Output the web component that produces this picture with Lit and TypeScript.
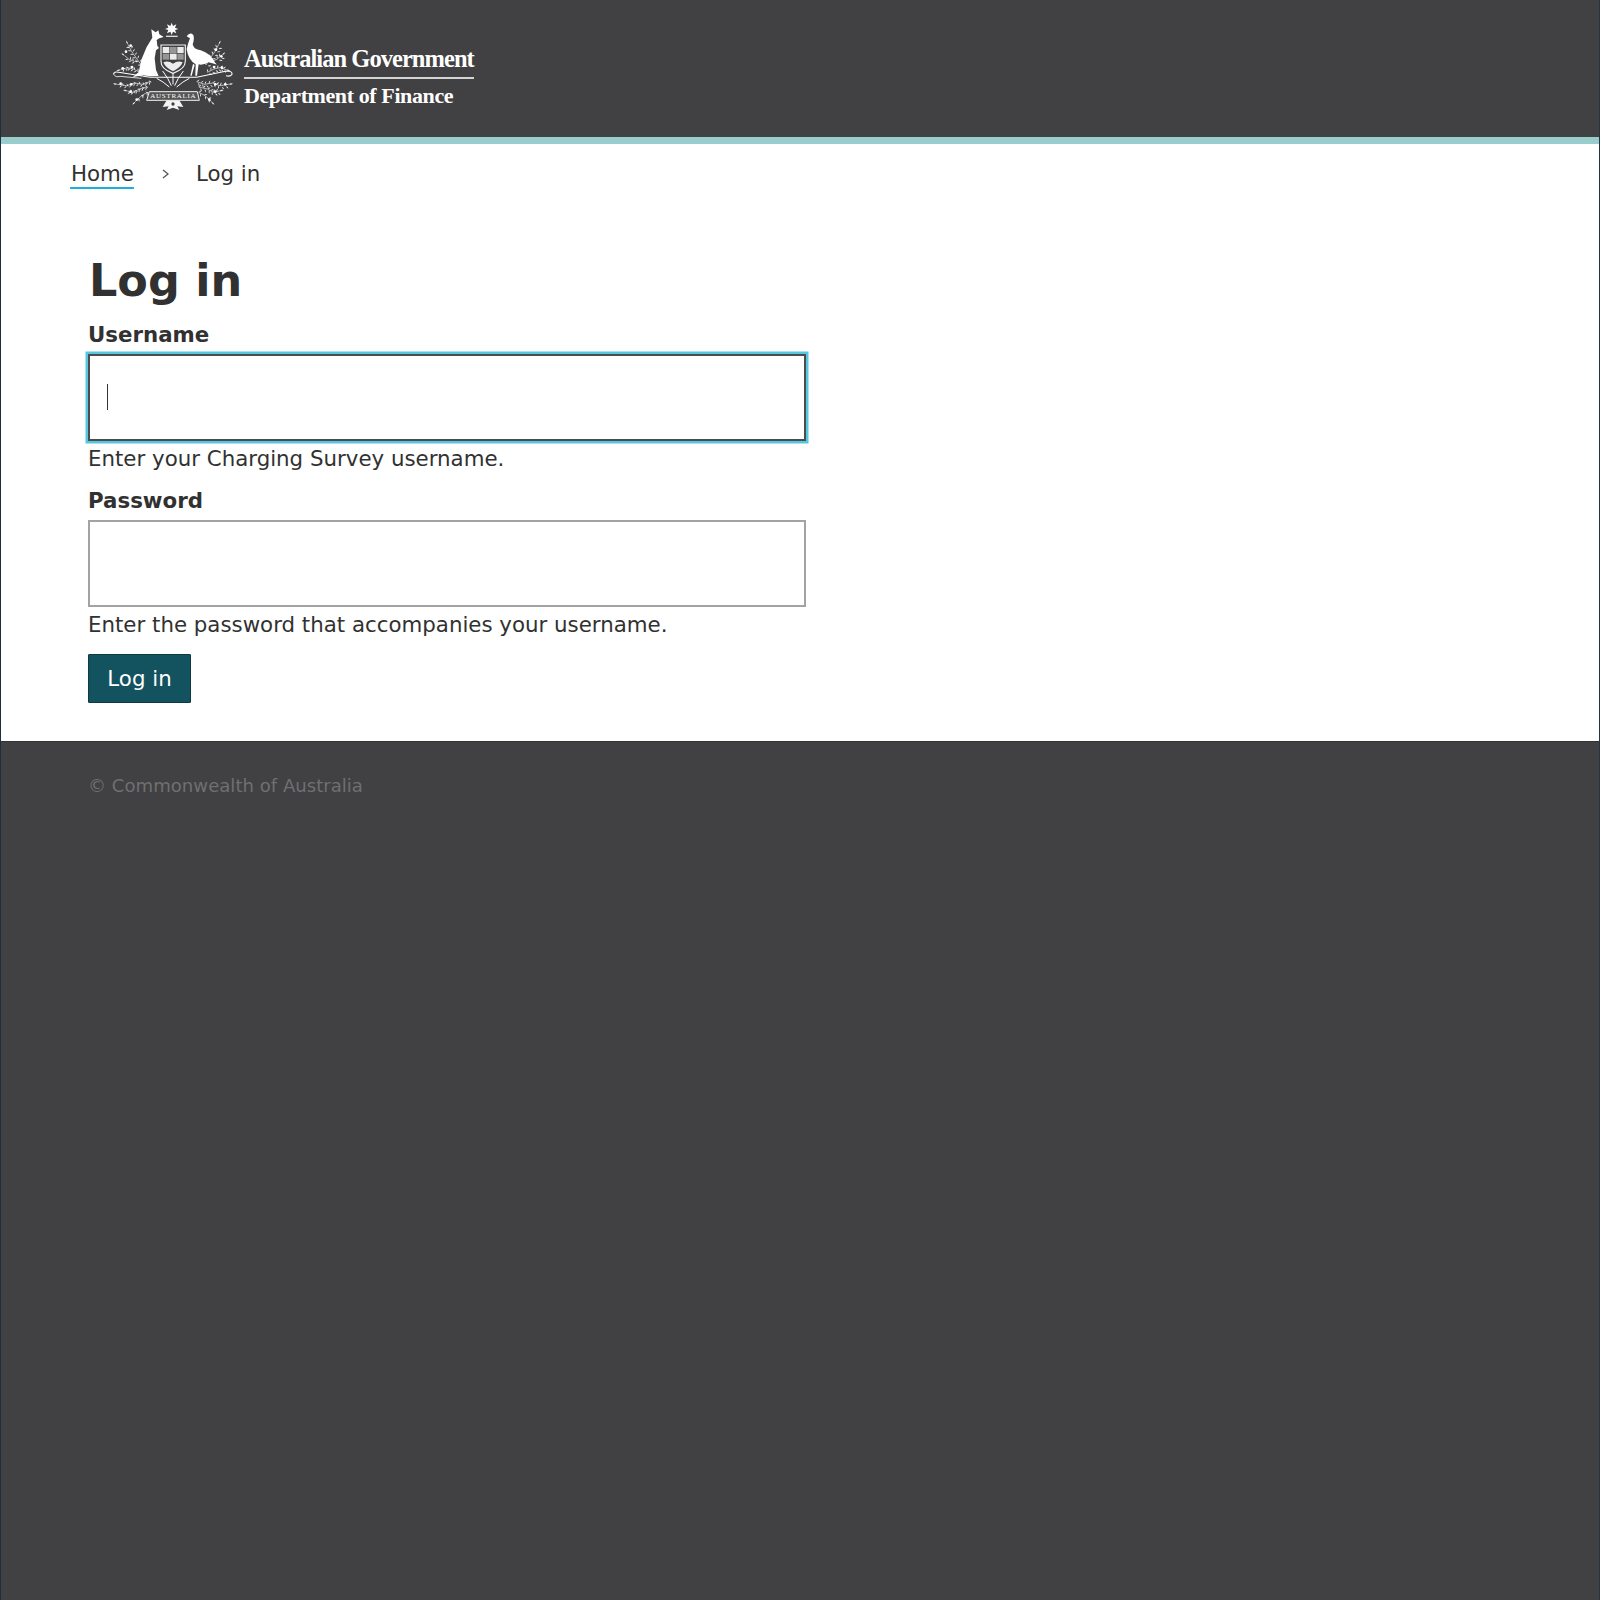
import { LitElement, html, css, svg } from "lit";
import { customElement } from "lit/decorators.js";

type P = [number, number];

const leaf = (x: number, y: number, a: number, l: number) =>
  svg`<path transform="translate(${x.toFixed(1)} ${y.toFixed(1)}) rotate(${a.toFixed(0)})" d="M0 0 Q${l / 2} ${-l / 3.4} ${l} 0 Q${l / 2} ${l / 3.4} 0 0Z"/>`;

const sprig = (pts: P[], size = 11) => {
  const out: unknown[] = [];
  for (let i = 0; i < pts.length - 1; i++) {
    const [x0, y0] = pts[i];
    const [x1, y1] = pts[i + 1];
    const len = Math.hypot(x1 - x0, y1 - y0);
    const base = (Math.atan2(y1 - y0, x1 - x0) * 180) / Math.PI;
    const steps = Math.max(1, Math.round(len / 12));
    for (let s = 0; s < steps; s++) {
      const t = s / steps;
      const x = x0 + (x1 - x0) * t;
      const y = y0 + (y1 - y0) * t;
      out.push(leaf(x, y, base - 55, size), leaf(x + 5, y + 3, base + 55, size));
    }
  }
  const [ex, ey] = pts[pts.length - 1];
  const [px, py] = pts[pts.length - 2];
  out.push(leaf(ex, ey, (Math.atan2(ey - py, ex - px) * 180) / Math.PI, size + 2));
  return out;
};

const path = (pts: P[]) => "M" + pts.map((p) => p.join(" ")).join("L");

const branches: P[][] = [
  [[124, 150], [108, 128], [94, 108], [84, 88]],
  [[104, 140], [86, 132], [74, 122]],
  [[120, 172], [100, 162], [82, 158], [62, 164]],
  [[150, 200], [128, 208], [104, 204], [80, 212], [52, 208]],
  [[140, 216], [118, 222], [100, 232], [82, 228]],
  [[142, 232], [128, 240], [116, 250], [106, 260]],
  [[318, 150], [332, 128], [346, 108], [356, 88]],
  [[336, 140], [352, 132], [366, 120]],
  [[322, 172], [342, 162], [360, 158], [378, 164]],
  [[290, 200], [314, 208], [338, 204], [360, 212], [386, 208]],
  [[296, 216], [322, 222], [340, 232], [358, 228]],
  [[296, 232], [312, 240], [324, 250], [334, 260]],
];

const blossoms: P[] = [
  [78, 110], [92, 92], [68, 160], [96, 156], [62, 206], [94, 208], [92, 230], [110, 254],
  [348, 104], [364, 124], [366, 158], [342, 156], [376, 208], [346, 208], [346, 230], [328, 254],
];

@customElement("app-root")
export class AppRoot extends LitElement {
  static styles = css`
    :host {
      display: block;
      min-height: 1600px;
      background: #414042;
      font-family: "DejaVu Sans", sans-serif;
      color: #313131;
      box-sizing: border-box;
      padding: 0 1px;
      box-shadow: inset 1px 0 0 #1f2d3d, inset -1px 0 0 #2a3340;
    }
    * { box-sizing: border-box; }
    .top {
      height: 144px;
      border-bottom: 7px solid #99cccc;
      display: flex;
      align-items: flex-start;
      padding: 15px 0 0 99px;
    }
    .crest { width: 140px; height: 100px; flex: none; display: block; }
    .brand {
      margin: 30px 0 0 4px;
      width: 230px;
      color: #fff;
      font-family: "Liberation Serif", serif;
      font-weight: 700;
      font-size: 24.5px;
      letter-spacing: -0.95px;
      white-space: nowrap;
      line-height: 28px;
    }
    .gov { border-bottom: 2px solid #d4d4d4; height: 34px; }
    .dept { font-size: 22px; letter-spacing: -0.4px; margin-top: 3px; }
    main {
      background: #fff;
      height: 598px;
      padding-top: 15px;
      border-bottom: 1px solid #333;
    }
    .crumbs {
      display: flex;
      align-items: center;
      font-size: 21.33px;
      line-height: 30px;
      padding-left: 69px;
    }
    .crumbs a {
      color: #313131;
      text-decoration: none;
      border-bottom: 2px solid #1cb0dd;
      padding: 0 0 0 1px;
      height: 29px;
      line-height: 27px;
    }
    .sep { width: 62px; display: flex; justify-content: center; }
    .sep svg { width: 7px; height: 10px; display: block; }
    .form { padding: 62px 0 0 87px; width: 805px; }
    h1 {
      margin: 0 0 0 1px;
      font-size: 44.5px;
      font-weight: 700;
      line-height: 60px;
      color: #313131;
    }
    label {
      display: block;
      font-weight: 700;
      font-size: 21.33px;
      line-height: 30px;
      margin-top: 9px;
      color: #313131;
    }
    .field { position: relative; margin-top: 4px; height: 87px; }
    input {
      display: block;
      width: 718px;
      height: 87px;
      border: 2px solid #a3a3a3;
      background: #fff;
      padding: 0 18px;
      outline: none;
      border-radius: 0;
      font: inherit;
    }
    input.focus {
      border-color: #4c4c4c;
      box-shadow: 0 0 0 2.5px #55c8e0;
    }
    .caret {
      position: absolute;
      left: 19px;
      top: 30px;
      width: 1px;
      height: 26px;
      background: #333;
    }
    .hint { font-size: 21.33px; line-height: 30px; margin-top: 3px; color: #313131; }
    label.pw { margin-top: 12px; }
    button {
      display: block;
      margin: 14px 0 0 0;
      width: 103px;
      height: 49px;
      background: #13525f;
      color: #fff;
      border: 1px solid #0d3a44;
      border-radius: 1px;
      font: inherit;
      font-size: 21.33px;
      padding: 0;
    }
    footer {
      padding: 29px 0 0 87px;
      font-size: 18.1px;
      line-height: 30px;
      color: #6f6f71;
    }
  `;

  private crest() {
    return svg`
      <g fill="none" stroke="#f2f2f2">
        ${branches.map((b) => svg`<path d=${path(b)} stroke-width="2"/>`)}
      </g>
      <g fill="#f2f2f2">${branches.map((b) => sprig(b))}</g>
      <g fill="#fff">${blossoms.map(([x, y]) => svg`<circle cx=${x} cy=${y} r="4"/>`)}</g>
      <g fill="#fff" stroke="none">
        <path d="M215 23 L219 33 L229 28 L225 38 L235 42 L225 45 L229 55 L219 50 L215 60 L211 50 L201 55 L205 45 L195 42 L205 38 L201 28 L211 33Z"/>
        <rect x="198" y="62" width="35" height="4" fill="#ddd"/>
        <path d="M154 43 L167 52 L175 46 L178 58 L191 66 L178 70 L170 75 L172 92 L177 99 L168 106 L164 130 L168 165 L176 183 L150 184 L130 181 L98 186 L116 172 L124 134 L140 96 L157 68Z"/>
        <path d="M260 64 Q270 50 280 60 Q284 72 278 88 Q282 104 302 106 Q332 114 348 148 L326 142 Q306 152 296 148 L291 182 L286 182 L287 148 Q264 134 260 102 Q264 84 270 70Z"/>
        <path d="M284 150 L275 182 L271 182 L279 146Z"/>
      </g>
      <g fill="none" stroke="#fff">
        <path d="M40 178 Q42 168 56 172 L150 187 L290 187 L380 168 Q398 168 396 178 Q390 186 378 182" stroke-width="3.2"/>
        <path d="M42 178 Q46 188 60 184 L124 190" stroke-width="2.4"/>
        <path d="M219 172 V208 M188 168 Q205 190 214 212 M250 168 Q233 190 224 212 M170 190 Q190 200 208 216 M268 190 Q248 200 230 216" stroke-width="3"/>
      </g>
      <path d="M183 90 H256 V138 Q256 162 219 175 Q182 162 183 138Z" fill="#414042" stroke="#f0f0f0" stroke-width="3.5"/>
      <g fill="#ececec">
        <rect x="188" y="96" width="20" height="18"/>
        <rect x="210" y="96" width="20" height="18" opacity=".5"/>
        <rect x="232" y="96" width="19" height="18"/>
        <rect x="188" y="116" width="20" height="18" opacity=".5"/>
        <rect x="210" y="116" width="20" height="18"/>
        <rect x="232" y="116" width="19" height="18" opacity=".5"/>
        <path d="M190 142 Q205 136 219 146 Q233 136 248 142 Q242 158 219 169 Q196 158 190 142Z"/>
      </g>
      <g>
        <path d="M200 256 L238 256 L250 276 L232 274 L238 285 L219 278 L200 285 L206 274 L188 276Z" fill="#f4f4f4"/>
        <circle cx="219" cy="267" r="5" fill="#414042"/>
        <path d="M148 230 H292 L298 256 H140Z" fill="#555" stroke="#f0f0f0" stroke-width="3"/>
        <text x="219" y="250" text-anchor="middle" fill="#fff" font-family="Liberation Serif, serif" font-size="21" textLength="136">AUSTRALIA</text>
      </g>
    `;
  }

  render() {
    return html`
      <header class="top">
        <svg class="crest" viewBox="0 0 420 300" role="img" aria-label="Commonwealth coat of arms">${this.crest()}</svg>
        <div class="brand">
          <div class="gov">Australian Government</div>
          <div class="dept">Department of Finance</div>
        </div>
      </header>
      <main>
        <nav class="crumbs">
          <a href="#">Home</a>
          <span class="sep"><svg viewBox="0 0 7 10"><path d="M1 1 L6 5 L1 9" fill="none" stroke="#555" stroke-width="1.3"/></svg></span>
          <span>Log in</span>
        </nav>
        <form class="form" @submit=${(e: Event) => e.preventDefault()}>
          <h1>Log in</h1>
          <label>Username</label>
          <div class="field"><input class="focus" type="text" /><span class="caret"></span></div>
          <div class="hint">Enter your Charging Survey username.</div>
          <label class="pw">Password</label>
          <div class="field"><input type="password" /></div>
          <div class="hint">Enter the password that accompanies your username.</div>
          <button type="submit">Log in</button>
        </form>
      </main>
      <footer>© Commonwealth of Australia</footer>
    `;
  }
}
